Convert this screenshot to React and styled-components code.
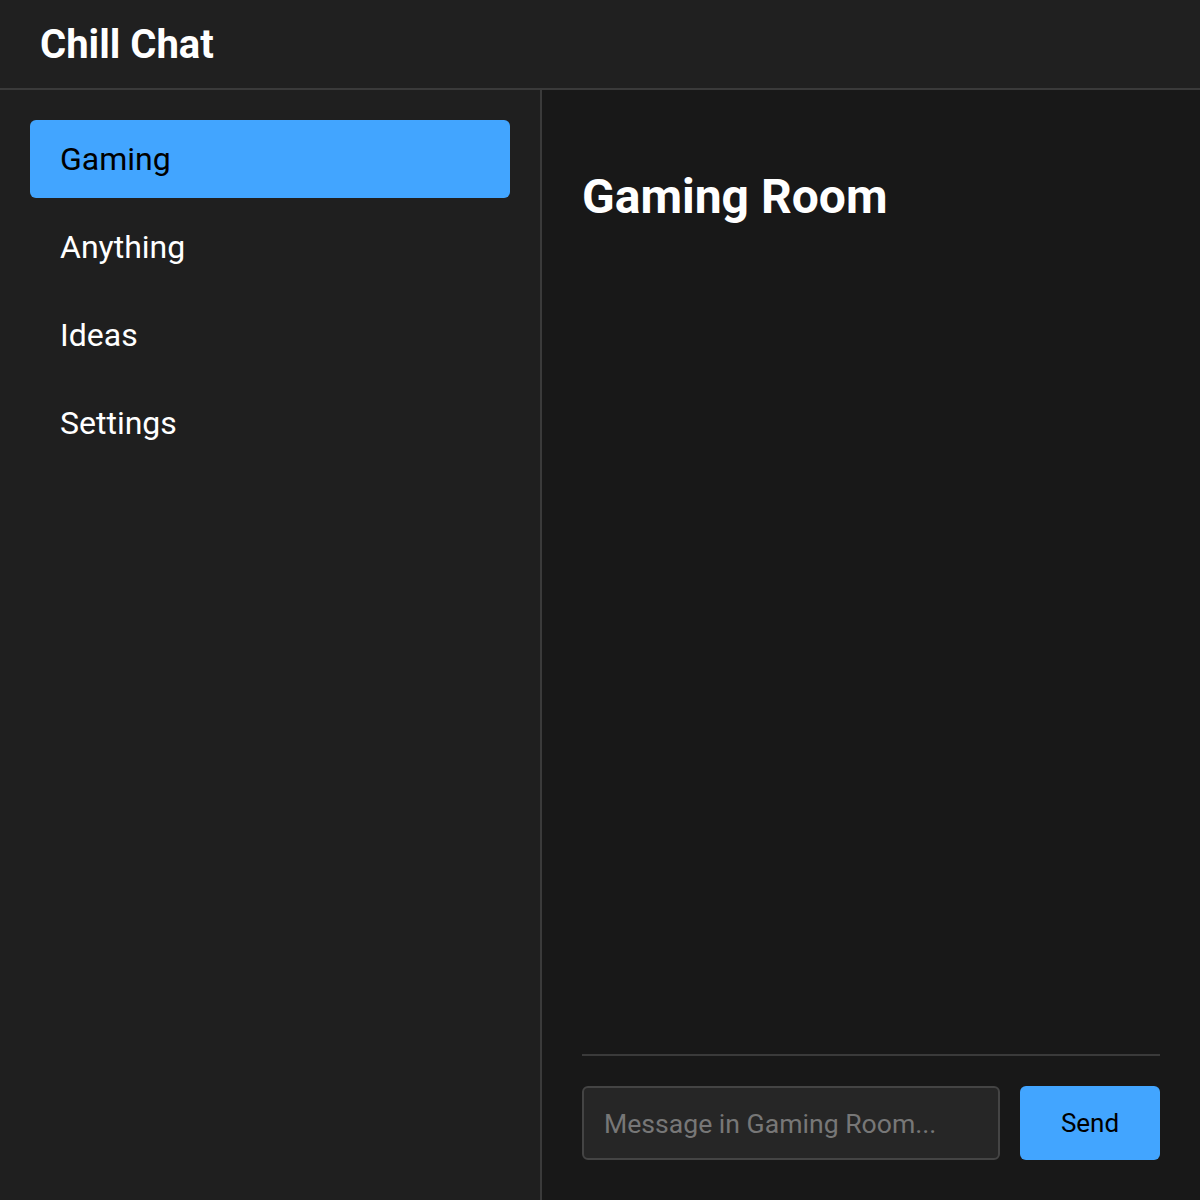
import React, { useState } from 'react'
import styled, { createGlobalStyle } from 'styled-components'

const GlobalStyle = createGlobalStyle`
  html, body {
    margin: 0;
    padding: 0;
    background: #181818;
  }
  * {
    box-sizing: border-box;
  }
  body {
    font-family: Roboto, "Liberation Sans", sans-serif;
  }
`

const Shell = styled.div`
  display: flex;
  flex-direction: column;
  height: 100vh;
  color: #ffffff;
`

const TopBar = styled.header`
  display: flex;
  align-items: center;
  height: 90px;
  padding: 0 40px;
  background: #202020;
  border-bottom: 2px solid #3a3a3a;
`

const Brand = styled.h1`
  margin: 0;
  font-size: 40px;
  font-weight: 700;
`

const Body = styled.div`
  display: flex;
  flex: 1;
  min-height: 0;
`

const Sidebar = styled.nav`
  display: flex;
  flex-direction: column;
  gap: 10px;
  width: 542px;
  padding: 30px;
  background: #1f1f1f;
  border-right: 2px solid #3a3a3a;
`

const RoomButton = styled.button`
  display: flex;
  align-items: center;
  height: 78px;
  padding: 0 30px;
  border: none;
  border-radius: 6px;
  background: ${p => (p.$active ? '#42a5ff' : 'transparent')};
  color: ${p => (p.$active ? '#000000' : '#ffffff')};
  font-family: inherit;
  font-size: 32px;
  text-align: left;
  cursor: pointer;
`

const Main = styled.main`
  display: flex;
  flex-direction: column;
  flex: 1;
  padding: 40px;
  background: #181818;
`

const RoomTitle = styled.h2`
  margin: 38px 0 0;
  font-size: 48px;
  font-weight: 700;
`

const Messages = styled.div`
  flex: 1;
`

const Composer = styled.form`
  display: flex;
  gap: 20px;
  padding-top: 30px;
  border-top: 2px solid #3a3a3a;
`

const MessageInput = styled.input`
  flex: 1;
  height: 74px;
  padding: 0 20px;
  border: 2px solid #444444;
  border-radius: 6px;
  background: #262626;
  color: #ffffff;
  font-family: inherit;
  font-size: 26.6px;
  outline: none;

  &::placeholder {
    color: #777777;
  }
`

const SendButton = styled.button`
  width: 140px;
  height: 74px;
  border: none;
  border-radius: 6px;
  background: #42a5ff;
  color: #000000;
  font-family: inherit;
  font-size: 26px;
  cursor: pointer;
`

const rooms = ['Gaming', 'Anything', 'Ideas', 'Settings']

export default function App() {
  const [room, setRoom] = useState('Gaming')

  return (
    <Shell>
      <GlobalStyle />
      <TopBar>
        <Brand>Chill Chat</Brand>
      </TopBar>
      <Body>
        <Sidebar>
          {rooms.map(name => (
            <RoomButton
              key={name}
              $active={room === name}
              onClick={() => setRoom(name)}
            >
              {name}
            </RoomButton>
          ))}
        </Sidebar>
        <Main>
          <RoomTitle>{room} Room</RoomTitle>
          <Messages />
          <Composer onSubmit={e => e.preventDefault()}>
            <MessageInput placeholder={`Message in ${room} Room...`} />
            <SendButton type="submit">Send</SendButton>
          </Composer>
        </Main>
      </Body>
    </Shell>
  )
}
